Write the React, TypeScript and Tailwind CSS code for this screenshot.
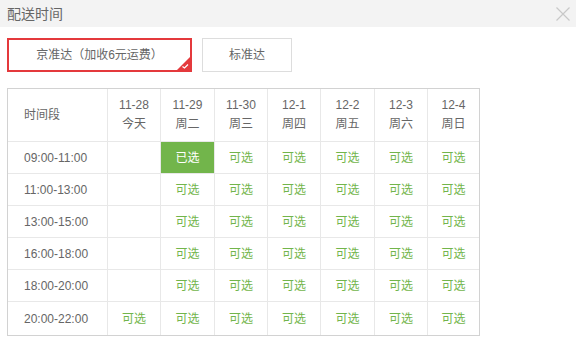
import React from "react";

const days = [
  ["11-28", "今天"],
  ["11-29", "周二"],
  ["11-30", "周三"],
  ["12-1", "周四"],
  ["12-2", "周五"],
  ["12-3", "周六"],
  ["12-4", "周日"],
];

const slots = ["09:00-11:00", "11:00-13:00", "13:00-15:00", "16:00-18:00", "18:00-20:00", "20:00-22:00"];

export default function App() {
  const font = { fontFamily: '"Liberation Sans", "Noto Sans CJK SC", sans-serif' };
  return (
    <div className="w-[576px] h-[342px] bg-white overflow-hidden" style={font}>
      <div className="h-[27px] bg-[#f3f3f3] flex items-center justify-between pl-[7px] pr-[6px]">
        <span className="text-[14px] text-[#666] leading-none">配送时间</span>
        <svg width="14" height="14" viewBox="0 0 14 14">
          <path d="M0.5 0.5 L13.5 13.5 M13.5 0.5 L0.5 13.5" stroke="#c8c8c8" strokeWidth="1.2" />
        </svg>
      </div>
      <div className="flex gap-[10px] pl-[7px] pt-[11px]">
        <div className="relative w-[185px] h-[34px] border-2 border-[#e4393c] flex items-center justify-center text-[12px] text-[#666]">
          京准达（加收6元运费）
          <div className="absolute right-0 bottom-0 w-[13px] h-[13px]">
            <svg width="13" height="13" viewBox="0 0 13 13">
              <polygon points="13,0 13,13 0,13" fill="#e4393c" />
              <path d="M5.5 9.5 L7.5 11 L11 7.5" stroke="#fff" strokeWidth="1.2" fill="none" />
            </svg>
          </div>
        </div>
        <div className="w-[90px] h-[34px] border border-[#ddd] flex items-center justify-center text-[12px] text-[#666]">
          标准达
        </div>
      </div>
      <div className="ml-[7px] mt-[16px] w-[473px] border border-[#d2d2d2]">
        <div className="grid grid-cols-[100px_53px_54px_53px_53px_54px_53px_1fr] text-[12px] text-[#666]">
          <div className="h-[53px] border-r border-b border-[#e8e8e8] flex items-center pl-[16px]">时间段</div>
          {days.map((d, i) => (
            <div
              key={i}
              className={`h-[53px] border-b border-[#e8e8e8] flex flex-col items-center justify-center leading-[19px] ${i < 6 ? "border-r" : ""}`}
            >
              <span>{d[0]}</span>
              <span>{d[1]}</span>
            </div>
          ))}
          {slots.map((s, r) => (
            <React.Fragment key={s}>
              <div className={`${r < 5 ? "h-[32px] border-b" : "h-[33px]"} border-r border-[#e8e8e8] flex items-center pl-[16px]`}>{s}</div>
              {days.map((_, c) => {
                const selected = r === 0 && c === 1;
                const empty = c === 0 && r < 5;
                return (
                  <div
                    key={c}
                    className={`${r < 5 ? "h-[32px] border-b" : "h-[33px]"} border-[#e8e8e8] flex items-center justify-center ${c < 6 ? "border-r" : ""}`}
                  >
                    {selected ? (
                      <div className="w-full h-full bg-[#72b54b] text-white flex items-center justify-center">已选</div>
                    ) : empty ? null : (
                      <span className="text-[#72b54b]">可选</span>
                    )}
                  </div>
                );
              })}
            </React.Fragment>
          ))}
        </div>
      </div>
    </div>
  );
}
